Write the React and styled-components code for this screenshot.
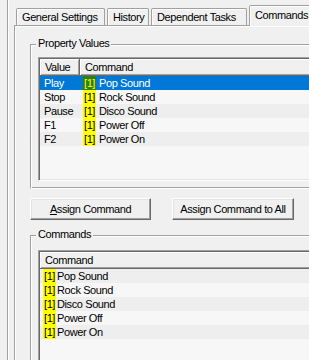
import React from "react";
import styled, { createGlobalStyle } from "styled-components";

const GlobalStyle = createGlobalStyle`
  html, body {
    margin: 0;
    padding: 0;
    background: #f0f0f0;
    overflow: hidden;
  }
  body {
    font-family: "Liberation Sans", Arial, sans-serif;
    font-size: 11px;
    letter-spacing: -0.4px;
    color: #000;
  }
`;

const Window = styled.div`
  width: 309px;
  height: 360px;
  overflow: hidden;
  padding-left: 7px;
  box-sizing: border-box;
`;

const Frame = styled.div`
  width: 380px;
  height: 100%;
  box-sizing: border-box;
  border-left: 1px solid #a0a0a0;
  box-shadow: inset 1px 0 #fff;
  padding: 5px 0 0 6px;
  display: flex;
  flex-direction: column;
`;

const TabStrip = styled.div`
  display: flex;
  align-items: flex-end;
  height: 20px;
  gap: 2px;
  padding-left: 2px;
  position: relative;
  z-index: 1;
`;

const Tab = styled.div`
  box-sizing: border-box;
  width: ${(p) => p.w}px;
  height: ${(p) => (p.active ? 21 : 17)}px;
  margin-bottom: ${(p) => (p.active ? -1 : 0)}px;
  padding: ${(p) => (p.active ? "3px 0 0 5px" : "2px 0 0 5px")};
  border: 1px solid #a0a0a0;
  border-bottom: none;
  border-radius: 2px 2px 0 0;
  box-shadow: inset 1px 1px #fff;
  background: #f0f0f0;
  line-height: 13px;
  white-space: nowrap;
`;

const Panel = styled.div`
  flex: 1;
  border-top: 1px solid #a0a0a0;
  border-left: 1px solid #a0a0a0;
  box-shadow: inset 1px 1px #fff;
  padding: 18px 0 0 15px;
  display: flex;
  flex-direction: column;
`;

const Group = styled.div`
  position: relative;
  width: 330px;
  border: 1px solid #a0a0a0;
  border-right-color: #fff;
  border-bottom-color: #fff;
  box-shadow: inset 1px 1px #fff, inset -1px -1px #a0a0a0;
  padding: ${(p) => p.pad};
  display: flex;
  flex-direction: column;
  flex: ${(p) => (p.grow ? 1 : "none")};
  margin-top: ${(p) => p.top || 0}px;
  margin-bottom: ${(p) => (p.grow ? -4 : 0)}px;
`;

const Legend = styled.span`
  position: absolute;
  top: -8px;
  left: 5px;
  padding: 0 2px;
  background: #f0f0f0;
  line-height: 13px;
`;

const ListBox = styled.div`
  height: ${(p) => (p.h ? `${p.h}px` : "auto")};
  flex: ${(p) => (p.h ? "none" : 1)};
  border: 1px solid;
  border-color: #a0a0a0 #fff #fff #a0a0a0;
  box-shadow: inset 1px 1px #696969, inset -1px -1px #e3e3e3;
  background: #f7f7f7;
  padding: 1px;
  box-sizing: border-box;
`;

const Header = styled.div`
  display: flex;
  height: 17px;
`;

const HeaderCell = styled.div`
  box-sizing: border-box;
  width: ${(p) => (p.w ? `${p.w}px` : "auto")};
  flex: ${(p) => (p.w ? "none" : 1)};
  height: 17px;
  padding-left: 5px;
  line-height: 16px;
  border-right: 1px solid #696969;
  border-bottom: 1px solid #696969;
  box-shadow: inset 1px 1px #fff, inset -1px -1px #a0a0a0;
  background: #f0f0f0;
`;

const Row = styled.div`
  display: flex;
  height: 14px;
  line-height: 14px;
  white-space: nowrap;
  background: ${(p) =>
    p.selected ? "#0078d7" : p.odd ? "#f7f7f7" : "#eeeeee"};
  color: ${(p) => (p.selected ? "#fff" : "#000")};
`;

const KeyCell = styled.div`
  width: 40px;
  box-sizing: border-box;
  padding-left: 4px;
`;

const CommandCell = styled.div`
  display: flex;
  padding-left: ${(p) => p.indent}px;
`;

const Tag = styled.span`
  display: inline-block;
  padding: 0 ${(p) => p.px}px;
  margin-right: ${(p) => p.gap}px;
  background: ${(p) => (p.selected ? "#2f7d1c" : "#ffff00")};
  color: ${(p) => (p.selected ? "#ffff00" : "#000")};
`;

const ButtonRow = styled.div`
  display: flex;
  gap: 21px;
  margin-top: 9px;
`;

const Button = styled.button`
  box-sizing: border-box;
  width: ${(p) => p.w}px;
  height: 22px;
  font: inherit;
  letter-spacing: inherit;
  color: #000;
  background: #f0f0f0;
  border: 1px solid;
  border-color: #fff #696969 #696969 #fff;
  box-shadow: inset -1px -1px #a0a0a0, inset 1px 1px #e3e3e3;
  padding: 0;
  u {
    text-decoration: underline;
  }
`;

const properties = [
  { key: "Play", command: "Pop Sound" },
  { key: "Stop", command: "Rock Sound" },
  { key: "Pause", command: "Disco Sound" },
  { key: "F1", command: "Power Off" },
  { key: "F2", command: "Power On" },
];

const commands = ["Pop Sound", "Rock Sound", "Disco Sound", "Power Off", "Power On"];

const tabs = [
  { label: "General Settings", w: 89 },
  { label: "History", w: 42 },
  { label: "Dependent Tasks", w: 96 },
  { label: "Commands", w: 72, active: true },
];

const App = () => {
  return (
    <Window>
      <GlobalStyle />
      <Frame>
        <TabStrip>
          {tabs.map((t) => (
            <Tab key={t.label} w={t.w} active={t.active}>
              {t.label}
            </Tab>
          ))}
        </TabStrip>
        <Panel>
          <Group pad="12px 0 7px 7px">
            <Legend>Property Values</Legend>
            <ListBox h={124}>
              <Header>
                <HeaderCell w={40}>Value</HeaderCell>
                <HeaderCell>Command</HeaderCell>
              </Header>
              {properties.map((p, i) => (
                <Row key={p.key} selected={i === 0} odd={i % 2 === 1}>
                  <KeyCell>{p.key}</KeyCell>
                  <CommandCell indent={3}>
                    <Tag px={1} gap={3} selected={i === 0}>
                      [1]
                    </Tag>
                    {p.command}
                  </CommandCell>
                </Row>
              ))}
            </ListBox>
          </Group>
          <ButtonRow>
            <Button w={121}>
              <u>A</u>ssign Command
            </Button>
            <Button w={122}>Assign Command to All</Button>
          </ButtonRow>
          <Group pad="14px 0 0 7px" top={15} grow>
            <Legend>Commands</Legend>
            <ListBox>
              <Header>
                <HeaderCell>Command</HeaderCell>
              </Header>
              {commands.map((c, i) => (
                <Row key={c} odd={i % 2 === 1}>
                  <CommandCell indent={3}>
                    <Tag px={1} gap={1}>
                      [1]
                    </Tag>
                    {c}
                  </CommandCell>
                </Row>
              ))}
            </ListBox>
          </Group>
        </Panel>
      </Frame>
    </Window>
  );
};

export default App;
